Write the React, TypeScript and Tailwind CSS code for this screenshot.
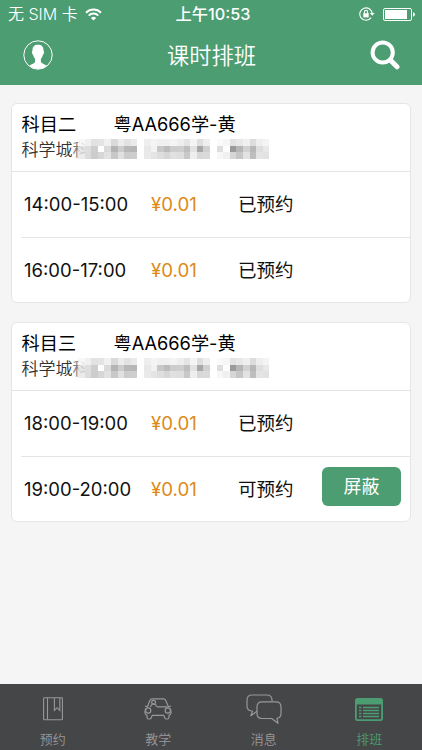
import type { ReactNode } from 'react'

interface Slot {
  time: string
  price: string
  status: string
  action?: string
}

interface Course {
  subject: string
  plate: string
  slots: Slot[]
}

const courses: Course[] = [
  {
    subject: '科目二',
    plate: '粤AA666学-黄',
    slots: [
      { time: '14:00-15:00', price: '¥0.01', status: '已预约' },
      { time: '16:00-17:00', price: '¥0.01', status: '已预约' },
    ],
  },
  {
    subject: '科目三',
    plate: '粤AA666学-黄',
    slots: [
      { time: '18:00-19:00', price: '¥0.01', status: '已预约' },
      { time: '19:00-20:00', price: '¥0.01', status: '可预约', action: '屏蔽' },
    ],
  },
]

// Grey levels of the redaction blocks, one row per line
const mosaic = [
  [252, 246, 240, 226, 228, 240, 218, 236, 226, 234, 255, 238, 244, 240, 240, 244, 238, 228, 244, 222, 238, 255, 250, 246, 226, 232, 240, 220, 238, 244],
  [238, 224, 222, 206, 255, 218, 180, 204, 184, 182, 255, 232, 242, 200, 188, 204, 206, 190, 226, 168, 208, 255, 222, 253, 154, 182, 210, 184, 222, 232],
  [244, 232, 220, 204, 214, 226, 200, 224, 204, 206, 255, 234, 228, 222, 214, 224, 222, 200, 238, 216, 218, 255, 246, 240, 214, 198, 226, 190, 228, 226],
]

function Mosaic() {
  return (
    <div className="absolute left-[50px] -top-px flex flex-col">
      {mosaic.map((row, y) => (
        <div key={y} className="flex h-[6.6px]">
          {row.map((v, x) => (
            <span
              key={x}
              className="w-[6.6px]"
              style={{ backgroundColor: `rgba(${v}, ${v}, ${v}, ${x === 0 ? 0.4 : x === 1 ? 0.85 : 1})` }}
            />
          ))}
        </div>
      ))}
    </div>
  )
}

function StatusBar() {
  return (
    <div className="grid h-7 grid-cols-3 items-center pl-2 pr-[7px] text-[16px]">
      <div className="flex items-center gap-[7px]">
        <span className="whitespace-nowrap">无 SIM 卡</span>
        <svg className="h-[13px] w-[17px]" viewBox="0 0 17 13" fill="none" stroke="currentColor" strokeWidth="2">
          <path d="M1 4.7a10.6 10.6 0 0 1 15 0" />
          <path d="M3.7 7.6a6.8 6.8 0 0 1 9.6 0" />
          <path d="M8.5 12.6 5.9 10a3.7 3.7 0 0 1 5.2 0z" fill="currentColor" stroke="none" />
        </svg>
      </div>
      <span className="pl-[3px] text-center text-[16.3px] font-medium whitespace-nowrap">上午10:53</span>
      <div className="flex items-center justify-end gap-2">
        <svg className="h-[14px] w-4" viewBox="0 0 16 14" fill="none" stroke="currentColor" strokeWidth="1.1">
          <path d="M12.1 10.6A6.2 6.2 0 1 1 13.2 7" />
          <path d="M10.8 6h4.8l-2.4 2.8z" fill="currentColor" stroke="none" />
          <rect x="4.3" y="6.2" width="5.4" height="4.2" fill="currentColor" stroke="none" />
          <path d="M5.4 6.4V5a1.6 1.6 0 0 1 3.2 0v1.4" />
        </svg>
        <svg className="h-[13px] w-8" viewBox="0 0 32 13" fill="none">
          <rect x="0.5" y="0.5" width="28" height="12" rx="1.5" stroke="currentColor" />
          <rect x="2" y="2" width="22" height="9" fill="currentColor" />
          <path d="M30 4.3q2 .6 2 2.2t-2 2.2z" fill="currentColor" />
        </svg>
      </div>
    </div>
  )
}

function Header() {
  return (
    <header className="h-[85px] shrink-0 bg-[#4c9d71] text-white">
      <StatusBar />
      <div className="flex h-[54px] items-center justify-between pl-[23px] pr-[22px]">
        <svg className="h-[30px] w-[30px]" viewBox="0 0 30 30">
          <circle cx="15" cy="15" r="14.2" fill="none" stroke="currentColor" strokeWidth="1" />
          <path
            d="M15 4.8c-4 0-5.8 2.2-5.5 6.2-.9.1-.7 2.8.5 3.6.4 2 1.1 3.2 2.1 4.2v3.3c-.8 1.7-4 2.2-5.9 3.8a14 14 0 0 0 17.6 0c-1.9-1.6-5.1-2.1-5.9-3.8v-3.3c1-1 1.7-2.2 2.1-4.2 1.2-.8 1.4-3.5.5-3.6.3-4-1.5-6.2-5.5-6.2z"
            fill="currentColor"
          />
        </svg>
        <h1 className="pt-0.5 text-[22.3px] leading-none font-[350]">课时排班</h1>
        <svg className="h-[30px] w-[30px]" viewBox="0 0 30 30" fill="none" stroke="currentColor">
          <circle cx="12.7" cy="12.5" r="10.1" strokeWidth="4" />
          <path d="M20.5 20.3 27 26.8" strokeWidth="5" strokeLinecap="round" />
        </svg>
      </div>
    </header>
  )
}

function CourseCard({ course }: { course: Course }) {
  return (
    <section className="rounded-md border border-[#e6e6e6] bg-white font-normal">
      <div className="h-[67px] pl-[9.5px] pt-[10px]">
        <div className="flex h-[22px] items-center text-[18.2px] text-black">
          <span className="w-[92px]">{course.subject}</span>
          <span>{course.plate}</span>
        </div>
        <div className="relative mt-1 h-5 text-[17px] leading-5 font-[350] text-[#333]">
          科学城科
          <Mosaic />
        </div>
      </div>
      {course.slots.map((slot, i) => (
        <div key={slot.time}>
          <div className={i === 0 ? 'h-px bg-[#e4e4e4]' : 'ml-[9px] h-px bg-[#e4e4e4]'} />
          <div className="flex h-[64.5px] items-center pl-3 pr-[9px] pt-0.5 text-[18.5px] text-[#111]">
            <span className="w-[127px] text-[18.5px]">{slot.time}</span>
            <span className="w-[87px] text-[18.7px] text-[#dd8a16]">{slot.price}</span>
            <span>{slot.status}</span>
            {slot.action && (
              <button className="mb-[7px] ml-auto h-[39px] w-[79px] rounded-md bg-[#4c9d71] text-[18px] text-white">
                {slot.action}
              </button>
            )}
          </div>
        </div>
      ))}
    </section>
  )
}

function Tab({ label, active, children }: { label: string; active?: boolean; children: ReactNode }) {
  return (
    <div className={`flex flex-1 flex-col items-center ${active ? 'text-[#4c9d71]' : 'text-[#98989a]'}`}>
      <div className="flex h-[46px] items-center pt-1">{children}</div>
      <span className="text-[13px] leading-[18px]">{label}</span>
    </div>
  )
}

function TabBar() {
  return (
    <nav className="flex h-[66px] shrink-0 bg-[#454648] font-[350]">
      <Tab label="预约">
        <svg className="h-6 w-5" viewBox="0 0 20 24" fill="none" stroke="currentColor" strokeWidth="1.1">
          <rect x="0.6" y="0.8" width="18.8" height="22" rx="0.8" />
          <path d="M4.5 1v21.6M11.4 1v12.4l2.7-2.7 2.7 2.7V1" />
        </svg>
      </Tab>
      <Tab label="教学">
        <svg className="h-6 w-7" viewBox="0 0 28 24" fill="none" stroke="currentColor" strokeWidth="1.2" strokeLinejoin="round">
          <path d="M3.2 10.2 6 3.2Q6.6 1.8 8 1.8h11.6q1.4 0 2 1.4l3.1 7" />
          <path d="M2.9 9.8 1 9M25.1 9.8 27 9M12.8 9.8h10.9" />
          <circle cx="9.6" cy="5.2" r="1.9" />
          <path d="M6.6 10q.3-3 3-3 2.5 0 2.8 2.8" />
          <circle cx="4.2" cy="13.5" r="2.6" />
          <circle cx="23.8" cy="13.5" r="2.6" />
          <path d="M1.8 11.5q-1.1 2-.9 4.2.3 2 2.1 2.7v1.8q0 1.8 1.8 1.8h1q1 0 1.4-1l1-2.6h11.6l1 2.6q.4 1 1.4 1h1q1.8 0 1.8-1.8v-1.8q1.8-.7 2.1-2.7.2-2.2-.9-4.2" />
        </svg>
      </Tab>
      <Tab label="消息">
        <svg className="h-[30px] w-9" viewBox="0 0 36 30" fill="none" stroke="currentColor" strokeWidth="1.2" strokeLinejoin="round">
          <path d="M26 7.5V6q0-5-5-5H6Q1 1 1 6v6q0 4.6 4.6 5l.9.2-1.7 4.5 6.2-4.5" />
          <path d="M16 7.8h14q5 0 5 5v6.5q0 4.6-4 5l1 5-6.3-4.8H16q-5 0-5-5v-6.7q0-5 5-5z" />
        </svg>
      </Tab>
      <Tab label="排班" active>
        <svg className="h-[23px] w-7" viewBox="0 0 28 23" fill="none" stroke="currentColor">
          <rect x="0.9" y="0.9" width="26.2" height="21.2" rx="1.6" strokeWidth="1.8" />
          <path d="M1 1h26v5.5H1z" fill="currentColor" stroke="none" />
          <path d="M4 9.5h2.4M4 12.5h2.4M4 15.5h2.4M4 18.5h2.4M8 9.5h16M8 12.5h16M8 15.5h16M8 18.5h16" strokeWidth="1.4" />
        </svg>
      </Tab>
    </nav>
  )
}

export default function App() {
  return (
    <div className="flex h-[750px] w-[422px] flex-col overflow-hidden bg-[#f5f5f5] font-['Inter','Noto_Sans_CJK_SC',sans-serif] font-[350]">
      <Header />
      <main className="flex flex-1 flex-col gap-[19px] px-[11px] pt-[18px]">
        {courses.map((course) => (
          <CourseCard key={course.subject} course={course} />
        ))}
      </main>
      <TabBar />
    </div>
  )
}
